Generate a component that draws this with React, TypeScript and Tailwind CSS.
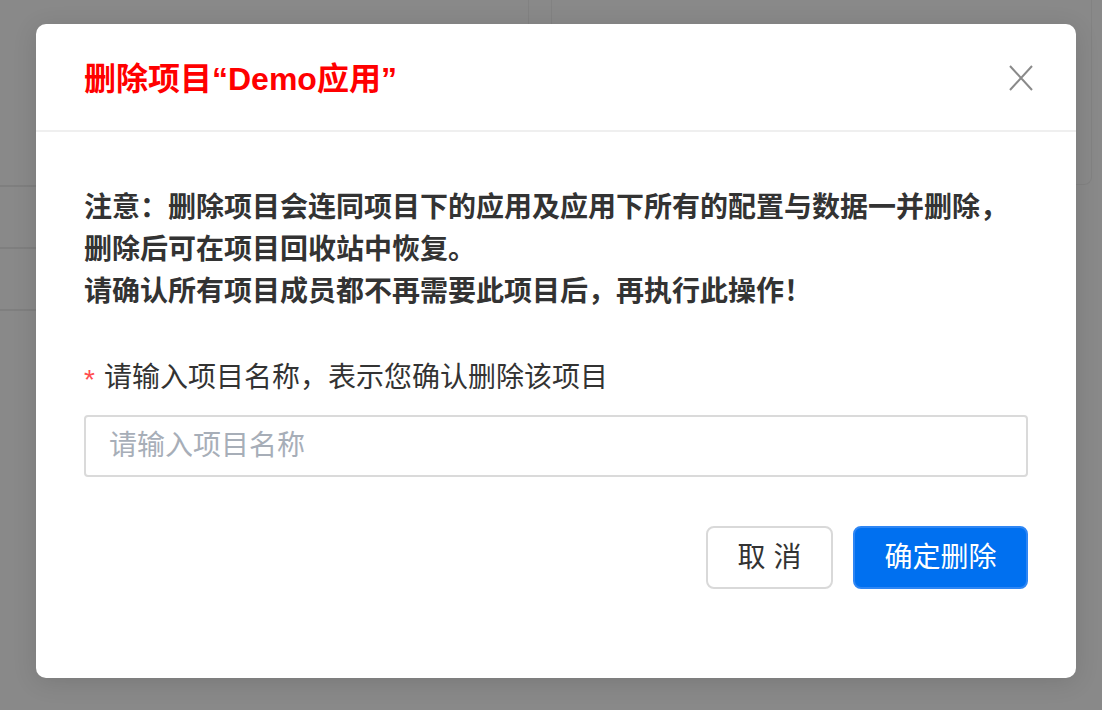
export default function App() {
  const font = "font-['Liberation_Sans','Noto_Sans_CJK_SC',sans-serif]"

  return (
    <div className={`relative h-[710px] w-full overflow-hidden bg-[#898989] ${font}`}>
      {/* dimmed page behind the dialog */}
      <div className="flex items-start">
        <div className="flex h-[311px] w-[529px] flex-col border-r border-[#828282]">
          <div className="h-[185px] shrink-0" />
          <div className="h-[62px] shrink-0 border-t-2 border-[#7f7f7f]" />
          <div className="h-[62px] shrink-0 border-t-2 border-[#7f7f7f]" />
          <div className="h-[2px] shrink-0 bg-[#7f7f7f]" />
        </div>
        <div className="ml-[22px] h-[185px] w-[541px] rounded-b-lg border border-t-0 border-[#828282]" />
      </div>

      {/* dialog */}
      <div className="absolute left-[36px] top-[24px] flex h-[654px] w-[1040px] flex-col rounded-[10px] bg-white shadow-[0_4px_24px_rgba(0,0,0,0.12)]">
        <div className="flex h-[108px] shrink-0 items-center justify-between border-b-2 border-[#efefef] pl-12 pr-[43px]">
          <h2 className="mt-[3px] text-[32px] font-bold leading-none text-[#ff0000]">删除项目“Demo应用”</h2>
          <button className="mt-[2px] text-[#8a8a8a]">
            <svg width="24" height="26" viewBox="0 0 24 26" fill="none" stroke="currentColor" strokeWidth="2">
              <path d="M1 1 L23 25 M23 1 L1 25" />
            </svg>
          </button>
        </div>

        <div className="flex flex-col px-12 pt-[55px]">
          <p className="text-[28px] font-bold leading-[42px] text-[#333333]">
            注意：删除项目会连同项目下的应用及应用下所有的配置与数据一并删除，
            <br />
            删除后可在项目回收站中恢复。
            <br />
            请确认所有项目成员都不再需要此项目后，再执行此操作！
          </p>

          <label className="mt-[44px] flex items-center text-[28px] leading-[42px] text-[#333333]">
            <span className="mr-[9px] mt-[4px] text-[28px] leading-none text-[#ff4d4f]">*</span>
            请输入项目名称，表示您确认删除该项目
          </label>

          <input
            className="mt-[16px] h-[62px] w-full rounded-[4px] border-2 border-[#dadada] px-[23px] text-[28px] text-[#333333] outline-none placeholder:text-[#a7aeb8]"
            placeholder="请输入项目名称"
          />

          <div className="mt-[49px] flex justify-end gap-5">
            <button className="h-[63px] w-[127px] rounded-lg border-2 border-[#d9d9d9] bg-white text-[28px] text-[#333333]">
              取 消
            </button>
            <button className="h-[63px] w-[175px] rounded-lg border-2 border-[#2e86f4] bg-[#0070f0] text-[28px] text-white">
              确定删除
            </button>
          </div>
        </div>
      </div>
    </div>
  )
}
